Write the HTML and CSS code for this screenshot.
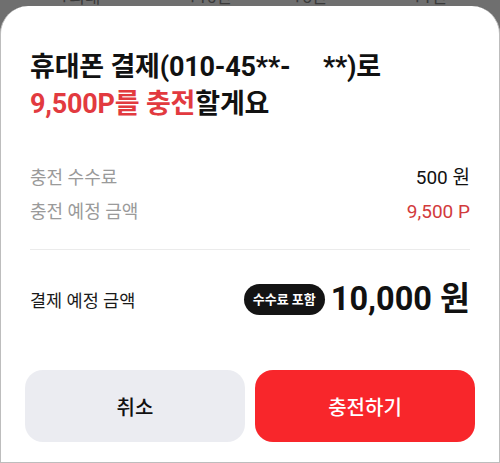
FILE: index.html
```html
<!DOCTYPE html>
<html lang="ko">
<head>
<meta charset="utf-8">
<link rel="stylesheet" href="styles.css">
</head>
<body>
<div class="screen">
  <div class="strip">
    <span>+최대</span><span>+10만</span><span>+5만</span><span>+1만</span>
  </div>
  <div class="sheet">
    <h1 class="title">휴대폰 결제(010-45**-     **)로<br><em>9,500P를 충전</em>할게요</h1>
    <div class="rows">
      <div class="row"><span class="label">충전 수수료</span><span class="value">500 원</span></div>
      <div class="row"><span class="label">충전 예정 금액</span><span class="value red">9,500 P</span></div>
    </div>
    <div class="divider"></div>
    <div class="total">
      <span class="total-label">결제 예정 금액</span>
      <div class="total-right">
        <span class="badge">수수료 포함</span>
        <span class="amount">10,000 원</span>
      </div>
    </div>
    <div class="actions">
      <button class="btn cancel">취소</button>
      <button class="btn confirm">충전하기</button>
    </div>
  </div>
</div>
</body>
</html>
```
FILE: styles.css
```css
* { box-sizing: border-box; }
html, body { margin: 0; padding: 0; }
body {
  width: 500px;
  height: 463px;
  overflow: hidden;
  background: #6f6f6f;
  font-family: Roboto, "Noto Sans CJK KR", sans-serif;
}
.screen {
  display: flex;
  flex-direction: column;
  height: 463px;
}
.strip {
  height: 6px;
  overflow: hidden;
  display: grid;
  grid-template-columns: 160px 100px 100px 140px;
  justify-items: center;
  color: #3a3a3a;
  font-size: 17px;
  line-height: 17px;
}
.strip span { margin-top: -11px; }
.sheet {
  flex: 1;
  background: #fff;
  border-radius: 28px 28px 0 0;
  border: 1px solid #bdbdbd;
  border-top: none;
  padding: 43px 29px 0 29px;
  display: flex;
  flex-direction: column;
}
.title {
  margin: 0;
  font-size: 27px;
  line-height: 37px;
  font-weight: 700;
  color: #111;
  white-space: pre;
  letter-spacing: -0.2px;
}
.title em {
  font-style: normal;
  color: #e23a3f;
}
.rows {
  margin-top: 44px;
  display: flex;
  flex-direction: column;
  gap: 12px;
}
.row {
  display: flex;
  justify-content: space-between;
  align-items: center;
  font-size: 18px;
  line-height: 22px;
}
.label { color: #9a9a9a; }
.value { color: #111; font-size: 19px; }
.value.red { color: #d23a3c; }
.divider {
  margin-top: 26px;
  height: 1px;
  background: #ebebeb;
}
.total {
  margin-top: 33px;
  display: flex;
  justify-content: space-between;
  align-items: center;
  height: 32px;
}
.total-label {
  font-size: 17.5px;
  color: #1a1a1a;
}
.total-right {
  display: flex;
  align-items: center;
  gap: 6px;
}
.badge {
  background: #141414;
  color: #fff;
  font-size: 13px;
  font-weight: 700;
  line-height: 31px;
  height: 31px;
  padding: 0 9px;
  border-radius: 16px;
}
.amount {
  font-size: 32.5px;
  font-weight: 700;
  color: #111;
  line-height: 34px;
}
.actions {
  margin: 55px -5px 0 -5px;
  display: flex;
  gap: 10px;
}
.btn {
  flex: 1;
  height: 72px;
  border: none;
  border-radius: 18px;
  font-family: Roboto, "Noto Sans CJK KR", sans-serif;
  font-size: 20px;
  font-weight: 500;
}
.cancel { background: #ebecf1; color: #111; }
.confirm { background: #f8262b; color: #fff; }
```
